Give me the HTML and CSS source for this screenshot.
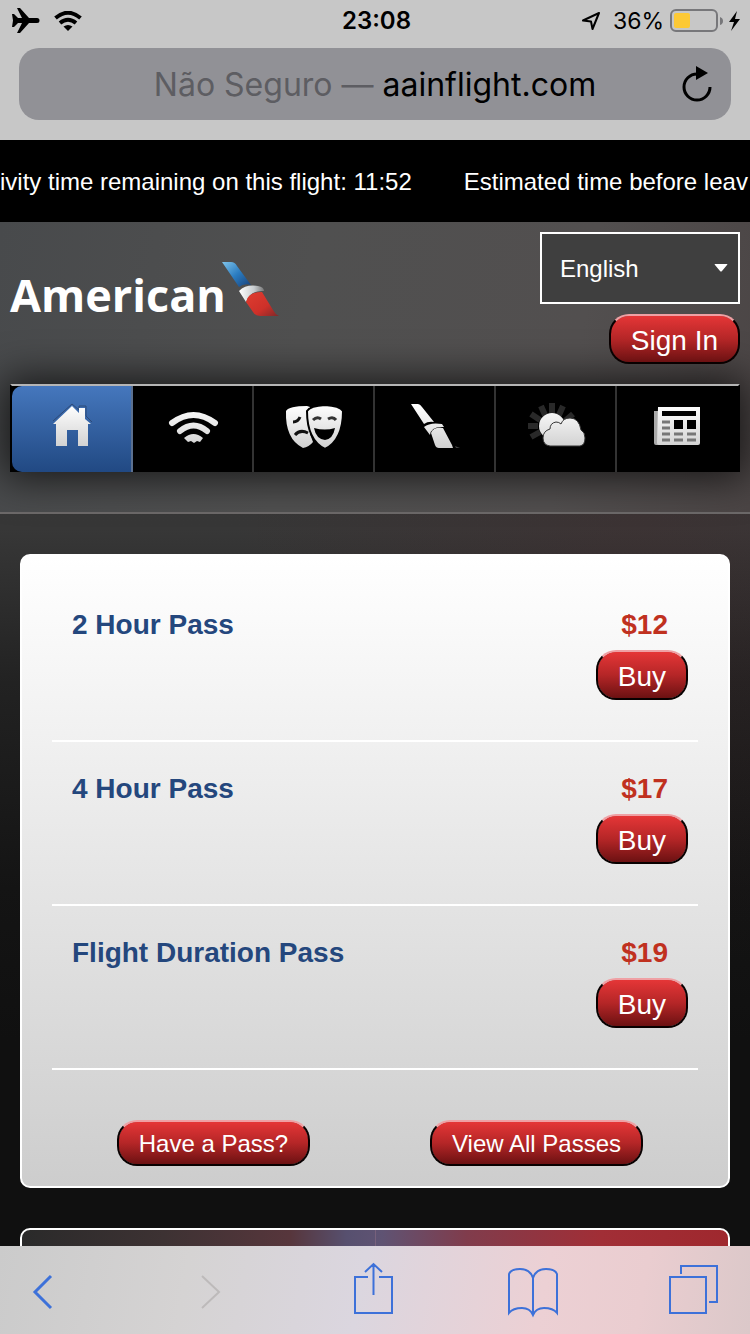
FILE: index.html
```html
<!DOCTYPE html>
<html lang="en">
<head>
<meta charset="utf-8">
<meta name="viewport" content="width=device-width, initial-scale=1">
<title>aainflight.com</title>
<link rel="stylesheet" href="styles.css">
</head>
<body>
<div class="browser-top">
  <div class="status">
    <div class="status-side">
      <svg width="28" height="26" viewBox="0 0 28 26"><path d="M0 6h2l4 4h4L5 0h3l9 10h8q2.500 0 2.500 2.500T25 15h-8L8 25H5l5-10H6l-4 4H0l1-6.500z"/></svg>
      <svg width="28" height="20" viewBox="0 0 28 20" fill="none" stroke="#000" stroke-width="4"><path d="M1.500 7Q14-3.500 26.500 7M6 12q8-6.500 16 0"/><path d="M9.500 15.500q4.500-3 9 0L14 20z" fill="#000" stroke="none"/></svg>
    </div>
    <span class="clock">23:08</span>
    <div class="status-side status-right">
      <svg width="20" height="20" viewBox="0 0 20 20" fill="none" stroke="#000" stroke-width="2" stroke-linejoin="round"><path d="M18 2 2 9.500l8 1L11.500 18z"/></svg>
      <span class="percent">36%</span>
      <svg class="battery" width="72" height="24" viewBox="0 0 72 24"><rect x="1" y="1" width="46" height="21" rx="5" fill="none" stroke="#77777a" stroke-width="2"/><rect x="4" y="4" width="16" height="15" rx="2" fill="#fdc935"/><path d="M50 8q3 1 3 4t-3 4z" fill="#77777a"/><path d="M67 2 59 13h5l-3 9 9-12h-5z"/></svg>
    </div>
  </div>
  <div class="address">
    <button class="url" type="button"><span class="insecure">Não Seguro —</span> aainflight.com</button>
    <button class="reload" type="button" aria-label="Reload"><svg width="32" height="38" viewBox="0 0 32 38"><path d="M16 9A13 13 0 1 0 29 22" fill="none" stroke="#000" stroke-width="3"/><path d="M15 1v14l12-7z"/></svg></button>
  </div>
</div>
<div class="ticker"><span>ivity time remaining on this flight: 11:52</span><span>Estimated time before leav</span></div>
<main class="page">
  <header class="header">
    <div class="masthead">
      <a class="logo" href="#"><span>American</span><svg width="60" height="58" viewBox="0 0 60 58">
        <defs><linearGradient id="blue" x2="1" y2="1"><stop stop-color="#7fc4ea"/><stop offset=".5" stop-color="#2b7cc0"/><stop offset="1" stop-color="#173f78"/></linearGradient><linearGradient id="red" x2="1" y2="1"><stop stop-color="#df3d30"/><stop offset=".6" stop-color="#ce3029"/><stop offset="1" stop-color="#7d2929"/></linearGradient><linearGradient id="silver" x2="1"><stop stop-color="#fff"/><stop offset=".6" stop-color="#c8cdd0"/><stop offset="1" stop-color="#777"/></linearGradient></defs>
        <path fill="url(#blue)" d="M0 2h9q4 0 6 4l14 19q-7-2-12 2z"/><path fill="url(#silver)" d="M17 31q7-7 19-5 6 1 6 5-14-1-18 11z"/><path fill="url(#red)" d="M24 42q2-10 16-10l11 18q2 4 6 6H38q-5 0-7-4z"/></svg></a>
      <div class="account">
        <div class="language">
          <select aria-label="Language"><option>English</option></select>
          <svg class="caret" width="14" height="8" viewBox="0 0 14 8"><path d="M1 0h12q1 0 0 1L8 7Q7 8 6 7L1 1Q0 0 1 0z" fill="#fff"/></svg>
        </div>
        <button class="btn" type="button">Sign In</button>
      </div>
    </div>
    <nav class="nav">
      <a class="tab active" href="#" aria-label="Home"><svg viewBox="0 0 64 64"><defs><linearGradient id="ink" gradientUnits="userSpaceOnUse" x1="0" y1="8" x2="0" y2="52"><stop stop-color="#fff"/><stop offset="1" stop-color="#cfcfcf"/></linearGradient></defs><path d="M13 24 32 7l7 6V9h7v10l6 6" fill="none" stroke="#2d4a78" stroke-width="1"/><path fill="url(#ink)" d="m32 9 7 7v-5h6v11l6 5h-3v22H38V33H27v16H16V27h-3z"/></svg></a>
      <a class="tab" href="#" aria-label="Wi-Fi"><svg viewBox="0 0 64 64" fill="none" stroke="url(#ink)" stroke-linecap="round" stroke-width="6"><path d="M11 26q21.500-16 43 0"/><path d="M19 34q13.500-11 27 0" stroke-width="6"/><path d="M23 41q9.500-8 19 0l-3 4-3-1-3 2-3-2-3 1z" fill="url(#ink)" stroke="none"/></svg></a>
      <a class="tab" href="#" aria-label="Entertainment"><svg viewBox="0 0 64 64"><path fill="url(#ink)" d="M4 14q3-5 21-5l3 1v27l3 8q-4 5-10 6Q3 42 4 14z"/><path d="M11 25q5 0 7-5M13 38q5-6 13-2" fill="none" stroke="#111" stroke-width="3"/><path fill="url(#ink)" stroke="#000" stroke-width="2" d="M25 14q3-5 18-6 15 1 18 6 0 29-18 38-18-9-18-38z"/><path d="M31 23q4-4 8-1M46 22q5-3 8 1" fill="none" stroke="#333" stroke-width="3"/><path d="M32 31q11 3 21 0-2 11-10 12-9-1-11-12z" fill="#000"/></svg></a>
      <a class="tab" href="#" aria-label="American"><svg viewBox="0 0 64 64"><path fill="url(#ink)" d="M8 7h7q2 0 4 3l12 15q-6-1-10 2zM21 30q6-5 18-3l2 3q-13-1-14 8zM28 36q2-6 12-5l9 17 1 3H36q-3 0-4-3z"/><path fill="#444" d="m52 49 5 2h-4z"/></svg></a>
      <a class="tab" href="#" aria-label="Weather"><svg viewBox="0 0 64 64"><path d="M28 16V6M35 18l4-9M41 24l8-7M21 18l-4-9M16 23l-9-6M14 29H4M16 35l-9 5" stroke="#292929" stroke-width="6"/><circle cx="28" cy="29" r="13" fill="url(#ink)"/><path fill="url(#ink)" stroke="#333" stroke-width="1" d="M26 49q-7-1-7-8 0-7 7-9 0-6 6-7 3 0 5 2 2-6 9-6 9 0 11 12 4 2 4 8 0 7-5 8z"/></svg></a>
      <a class="tab" href="#" aria-label="News"><svg viewBox="0 0 64 64"><path fill="#aaa" d="M8 14h5v34h-3q-2 0-2-2z"/><path fill="url(#ink)" d="M12 10h42v36q0 2-2 2H13q-2 0-2-2z"/><path d="M16 14h34v5H16zM28 23h9v9h-9zM41 23h9v9h-9z"/><path d="M16 25h8M16 31h8M16 37h8m4 0h9m4 0h9M16 43h8m4 0h9m4 0h9" stroke="#777" stroke-width="3"/></svg></a>
    </nav>
  </header>
  <section class="card passes">
    <div class="pass"><h2>2 Hour Pass</h2><div class="offer"><span class="price">$12</span><button class="btn" type="button">Buy</button></div></div>
    <div class="pass"><h2>4 Hour Pass</h2><div class="offer"><span class="price">$17</span><button class="btn" type="button">Buy</button></div></div>
    <div class="pass"><h2>Flight Duration Pass</h2><div class="offer"><span class="price">$19</span><button class="btn" type="button">Buy</button></div></div>
    <div class="more"><button class="btn small" type="button">Have a Pass?</button><button class="btn small" type="button">View All Passes</button></div>
  </section>
  <section class="card promo"><div></div><div></div></section>
</main>
<div class="toolbar">
  <button type="button" aria-label="Back"><svg width="48" height="56" viewBox="0 0 48 56"><path d="M19 12 3 28l16 16" stroke-width="3"/></svg></button>
  <button type="button" aria-label="Forward" disabled><svg width="54" height="56" viewBox="0 0 54 56"><path d="m16 12 17 16-17 16"/></svg></button>
  <button type="button" aria-label="Share"><svg width="54" height="56" viewBox="0 0 54 56"><path d="M22 13H9v36h37V13H33M27.500 31V0M19 8l8.500-8L36 8"/></svg></button>
  <button type="button" aria-label="Bookmarks"><svg width="54" height="56" viewBox="0 0 54 56"><path d="M27 14Q24 5 14 5 5 5 3 10v39q4-5 13-5 8 0 11 7 3-7 11-7 9 0 13 5V10q-2-5-11-5-10 0-13 9v37"/></svg></button>
  <button type="button" aria-label="Tabs"><svg width="54" height="56" viewBox="0 0 54 56"><path d="M4 13h36v36H4zM15 10V2h36v36h-8"/></svg></button>
</div>
</body>
</html>
```
FILE: styles.css
```css
* { box-sizing: border-box; }
body {
  margin: 0;
  height: 100vh;
  display: flex;
  flex-direction: column;
  overflow: hidden;
  background: #111;
  color: #fff;
  font-family: "Liberation Sans", Arial, sans-serif;
}
button { border: 0; padding: 0; background: none; font: inherit; color: inherit; }
svg { display: block; flex: none; }

.browser-top {
  flex: none;
  padding: 0 19px 20px;
  background: #c7c7c7;
  color: #000;
  font-family: Inter, "Noto Sans", sans-serif;
}
.status { display: flex; align-items: center; height: 48px; margin: 0 -10px; padding-bottom: 7px; }
.status-side { flex: 1; display: flex; align-items: center; gap: 14px; padding-left: 3px; }
.status-right { justify-content: flex-end; gap: 6px; padding: 0; }
.clock { font-size: 24px; font-weight: 600; }
.percent { margin-left: 6px; font-size: 23px; }
.battery { margin-right: -1px; }
.address {
  display: flex;
  align-items: center;
  height: 72px;
  padding: 0 18px 0 50px;
  border-radius: 20px;
  background: #919196;
}
.url { flex: 1; font-size: 32px; white-space: nowrap; }
.insecure { color: #5d5d62; }

.ticker {
  flex: none;
  display: flex;
  align-items: center;
  gap: 52px;
  height: 82px;
  padding-top: 2px;
  overflow: hidden;
  background: #000;
  font-size: 24px;
  white-space: nowrap;
}

.page {
  flex: 1;
  min-height: 0;
  overflow: hidden;
  background:
    radial-gradient(ellipse at 85% 28%, rgba(90, 30, 35, .15), transparent 45%),
    linear-gradient(#3a3a3a 0, #373737 30%, #222 45%, #141414 65%, #101010 80%);
}
.header {
  padding: 10px 10px 40px;
  border-bottom: 2px solid #6d6a6a;
  background: linear-gradient(100deg, #484a4c, #505050 40%, #524f4f 75%, #4b4545);
}
.masthead { display: flex; justify-content: space-between; }
.logo {
  display: flex;
  align-self: flex-start;
  margin-top: 28px;
  color: #fff;
  font-family: "Open Sans", "Noto Sans", sans-serif;
  font-size: 45px;
  font-weight: 700;
  line-height: 70px;
  text-decoration: none;
}
.logo svg { margin-left: -4px; }
.account { display: flex; flex-direction: column; align-items: flex-end; gap: 10px; }
.language { position: relative; width: 200px; height: 72px; }
.language select {
  width: 100%;
  height: 100%;
  padding: 0 18px;
  appearance: none;
  border: 2px solid #fff;
  border-radius: 0;
  background: #3f3f3f;
  color: #fff;
  font: 24px "Liberation Sans", Arial, sans-serif;
}
.caret { position: absolute; right: 12px; top: 32px; }

.btn {
  height: 50px;
  padding: 3px 20px 0;
  border: 2px solid #090000;
  border-top-color: #efa0a4;
  border-radius: 20px;
  background: linear-gradient(#e53637, #b52627 50%, #6c1112) padding-box;
  background-color: #90191a;
  font-size: 28px;
  line-height: 32px;
  white-space: nowrap;
}
.small { height: 46px; padding-top: 2px; font-size: 24px; }

.nav {
  display: grid;
  grid-template-columns: repeat(6, 1fr);
  height: 88px;
  margin-top: 20px;
  border: 2px solid #000;
  border-top-color: #b5b5b5;
  border-bottom: 0;
  background: #000;
  box-shadow: 0 0 40px 6px rgba(0, 0, 0, .7);
}
.tab { display: grid; place-items: center; border-right: 2px solid #333; }
.tab:last-child { border: 0; }
.tab svg { width: 64px; height: 64px; }
.active { border-color: #5b7090; border-radius: 10px 0 0 10px; background: linear-gradient(#4577bd, #214983); }

.card { border: 2px solid #fff; border-radius: 10px; margin: 40px 20px; }
.passes { padding: 22px 30px 20px; background: linear-gradient(#fff, #cdcdcd); }
.pass {
  display: flex;
  justify-content: space-between;
  height: 164px;
  padding: 31px 10px 0 20px;
  border-bottom: 2px solid #fff;
}
.pass h2 { margin: 0; color: #24477d; font-size: 28px; line-height: 32px; }
.offer { display: flex; flex-direction: column; align-items: flex-end; gap: 9px; }
.price { padding-right: 20px; color: #c0311f; font-size: 28px; font-weight: 700; line-height: 32px; }
.more { display: grid; grid-template-columns: 1fr 1fr; justify-items: center; padding-top: 50px; }
.promo {
  display: grid;
  grid-template-columns: 1fr 1fr;
  height: 200px;
  background: linear-gradient(90deg, #2a2a2a, #3d3233 20%, #57363c 38%, #57506f 46%, #5f5373 51%, #803c4c 63%, #a12e36 82%, #9f282e);
}
.promo div + div { border-left: 1px solid #77617c; }

.toolbar {
  flex: none;
  display: flex;
  justify-content: space-between;
  height: 88px;
  padding: 18px 30px 0 32px;
  background: linear-gradient(100deg, #cbcbcb, #d5d3d3 25%, #dbd6df 48%, #ecd0d4 72%, #eacdd0 85%, #dbc8c9);
}
.toolbar button { display: flex; align-items: flex-start; }
.toolbar svg { fill: none; stroke: #3d71d9; stroke-width: 2; overflow: visible; }
.toolbar button:disabled svg { stroke: #bdbaba; }
```
